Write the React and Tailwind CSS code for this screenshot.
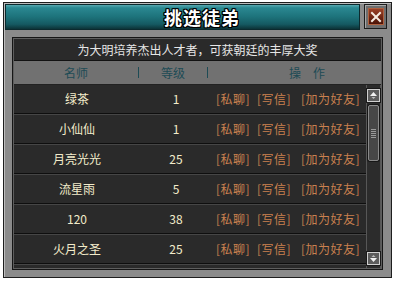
import React from 'react';

const rows = [
    { name: '绿茶', level: 1 },
    { name: '小仙仙', level: 1 },
    { name: '月亮光光', level: 25 },
    { name: '流星雨', level: 5 },
    { name: '120', level: 38 },
    { name: '火月之圣', level: 25 },
];

function Arrow({ down }) {
    return (
        <svg width="9" height="9" viewBox="0 0 9 9" className={down ? 'rotate-180' : ''}>
            <path d="M4.5 1 L8 5 L1 5 Z" fill="#f2f2f2" />
            <path d="M2.5 6 L6.5 6 L4.5 8 Z" fill="#bdbdbd" />
        </svg>
    );
}

function ScrollButton({ down }) {
    return (
        <div className="w-[13px] h-[13px] mx-auto bg-[#5c5c5c] border border-[#d0d0d0] shadow-[0_0_0_1px_#1a1a1a] flex items-center justify-center">
            <Arrow down={down} />
        </div>
    );
}

function Scrollbar() {
    return (
        <div className="w-[15px] flex flex-col bg-[#2c2c2c] border-x border-[#575757] pt-[4px] pb-[3px]">
            <ScrollButton />
            {/* thumb */}
            <div className="mt-[3px] mx-auto w-[11px] h-[56px] rounded-[2px] bg-[#474747] border border-[#8a8a8a] shadow-[0_0_0_1px_#161616] flex flex-col items-center justify-center gap-[1px]">
                {[0, 1, 2, 3, 4].map((i) => (
                    <div key={i} className="w-[5px] h-[1px] bg-[#9a9a9a]" />
                ))}
            </div>
            <div className="flex-1" />
            <ScrollButton down />
        </div>
    );
}

export default function App() {
    return (
        <div className="w-[396px] h-[281px] bg-white pt-[2px] pl-[3px] font-['Noto_Sans_CJK_SC',sans-serif] text-[12px] leading-none">
            <div className="w-[389px] h-[276px] border border-[#1e1e1e] bg-[#8b8b8b] shadow-[inset_1px_1px_0_#bdbdbd] flex flex-col">
                {/* title row */}
                <div className="h-[27px] flex gap-[4px] pl-[1px] pr-[4px] pt-[1px]">
                    <div className="flex-1 flex items-center pl-[158px] border border-[#0c2a2e] bg-[linear-gradient(180deg,#58a9b0_0%,#2a8891_12%,#1d727a_50%,#155a62_80%,#0c3337_100%)]">
                        <span className="text-[18px] font-bold text-white tracking-[1px] [text-shadow:1px_1px_0_#000,-1px_-1px_0_#000,1px_-1px_0_#000,-1px_1px_0_#000,0_1px_0_#000,1px_0_0_#000,0_-1px_0_#000,-1px_0_0_#000]">
                            挑选徒弟
                        </span>
                    </div>
                    <div className="w-[23px] h-[25px] bg-[#6e6e6e] border border-[#1c1c1c] shadow-[inset_1px_1px_0_#a8a8a8] flex items-center justify-center">
                        <div className="w-[16px] h-[17px] border border-[#b0603e] bg-[linear-gradient(180deg,#9a4026_0%,#6a2412_60%,#4c1408_100%)] flex items-center justify-center">
                            <svg width="12" height="12" viewBox="0 0 12 12">
                                <path d="M2 2 L10 10 M10 2 L2 10" stroke="#f6ece2" strokeWidth="2" strokeLinecap="square" />
                            </svg>
                        </div>
                    </div>
                </div>

                {/* body */}
                <div className="flex-1 px-[8px] py-[7px]">
                    <div className="h-full border border-[#161616] bg-[#5e5e5e] p-[1px] flex flex-col">
                        <div className="h-[21px] bg-[#2a2a2a] text-[#e6e6e6] flex items-center justify-center">
                            为大明培养杰出人才者，可获朝廷的丰厚大奖
                        </div>
                        <div className="h-[1px] bg-[#121212]" />
                        <div className="h-[23px] bg-[#717171] text-[#1d4b55] flex items-center">
                            <div className="w-[124px] text-center">名师</div>
                            <div className="w-[1px] h-[11px] bg-[#1d4b55]" />
                            <div className="w-[68px] text-center">等级</div>
                            <div className="w-[1px] h-[11px] bg-[#1d4b55]" />
                            <div className="flex-1 flex gap-[12px] pl-[81px]">
                                <span>操</span>
                                <span>作</span>
                            </div>
                        </div>
                        <div className="h-[1px] bg-[#222]" />
                        <div className="flex-1 flex bg-[#2a2a2a]">
                            <div className="flex-1 flex flex-col">
                                {rows.map((r) => (
                                    <div key={r.name} className="h-[30px] flex flex-col">
                                        <div className="flex-1 flex items-center">
                                            <div className="w-[126px] text-center text-[#f3ecca]">{r.name}</div>
                                            <div className="w-[72px] text-center text-[#f3ecca]">{r.level}</div>
                                            <div className="flex-1 flex pl-[4px] text-[#c9804f] tracking-[0.5px]">
                                                <span className="w-[41px]">[私聊]</span>
                                                <span className="w-[44px]">[写信]</span>
                                                <span>[加为好友]</span>
                                            </div>
                                        </div>
                                        <div className="h-[1px] bg-[#0e0e0e]" />
                                        <div className="h-[1px] bg-[#464646]" />
                                    </div>
                                ))}
                            </div>
                            <Scrollbar />
                        </div>
                    </div>
                </div>
            </div>
        </div>
    );
}
